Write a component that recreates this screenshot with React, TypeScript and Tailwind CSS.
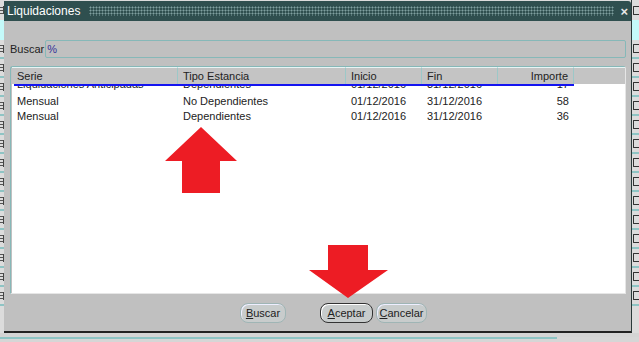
import React from 'react';

const COLS = [
  { key: 'serie', label: 'Serie', w: 'w-[166px]', align: 'text-left' },
  { key: 'tipo', label: 'Tipo Estancia', w: 'w-[168px]', align: 'text-left' },
  { key: 'inicio', label: 'Inicio', w: 'w-[76px]', align: 'text-left' },
  { key: 'fin', label: 'Fin', w: 'w-[76px]', align: 'text-left' },
  { key: 'importe', label: 'Importe', w: 'w-[76px]', align: 'text-right' },
];

const ROWS = [
  { serie: 'Liquidaciones Anticipadas', tipo: 'Dependientes', inicio: '01/12/2016', fin: '31/12/2016', importe: '17' },
  { serie: 'Mensual', tipo: 'No Dependientes', inicio: '01/12/2016', fin: '31/12/2016', importe: '58' },
  { serie: 'Mensual', tipo: 'Dependientes', inicio: '01/12/2016', fin: '31/12/2016', importe: '36' },
];

// bits of the form behind the dialog: only slivers of its fields show
function Sliver({ side }: { side: 'left' | 'right' }) {
  if (side === 'left') {
    return (
      <div className="flex items-center h-[8px]">
        <div className="w-[3px] h-[7px] border-y border-[#555] flex items-center">
          <div className="w-full h-[1px] bg-[#555]" />
        </div>
        <div className="w-[1px] h-[8px] bg-[#444]" />
      </div>
    );
  }
  return <div className="ml-[1px] w-[6px] h-[9px] border border-r-0 border-[#333] rounded-l-[1px]" />;
}

function SideStrip({ side }: { side: 'left' | 'right' }) {
  const cells = Array.from({ length: 14 });
  return (
    <div className={side === 'left' ? 'w-[4px] flex flex-col bg-[#dcdcdc]' : 'w-[7px] flex flex-col bg-[#dcdcdc]'}>
      <div className="h-[20px] shrink-0 flex items-center">
        <Sliver side={side} />
      </div>
      <div className="h-[20px] shrink-0 bg-[#c4fafa]" />
      {cells.map((_, i) => (
        <div key={i} className="h-[19px] shrink-0 flex items-center border-b-2 border-[#8ec4c4]">
          <Sliver side={side} />
        </div>
      ))}
    </div>
  );
}

function Btn({ label, focused, w }: { label: string; focused?: boolean; w: string }) {
  return (
    <button
      className={
        'h-[20px] ' + w + ' rounded-[8px] bg-[#c8cccc] text-[11px] text-[#222] flex items-center justify-center ' +
        (focused ? 'border-[1.5px] border-[#333] shadow-[inset_1px_1px_0_#fff]' : 'border border-[#9fb5b5] shadow-[inset_1px_1px_0_#eef]')
      }
    >
      <span className="underline underline-offset-1">{label[0]}</span>
      {label.slice(1)}
    </button>
  );
}

function Row({ r }: { r: (typeof ROWS)[number] }) {
  return (
    <div className="flex h-[15px] shrink-0 items-center text-[11px] text-[#222]">
      {COLS.map((c) => (
        <div key={c.key} className={c.w + ' ' + c.align + ' px-[5px] whitespace-nowrap overflow-hidden'}>
          {(r as Record<string, string>)[c.key]}
        </div>
      ))}
    </div>
  );
}

function UpArrow() {
  return (
    <svg className="absolute left-[165px] top-[127px]" width="73" height="67" viewBox="0 0 73 67">
      <path d="M36 0 L72 34 L55 34 L55 66 L17 66 L17 34 L0 34 Z" fill="#ed1c24" />
    </svg>
  );
}

function DownArrow() {
  return (
    <svg className="absolute left-[309px] top-[245px]" width="80" height="54" viewBox="0 0 80 54">
      <path d="M19 0 L59 0 L59 25 L79 25 L39 53 L0 25 L19 25 Z" fill="#ed1c24" />
    </svg>
  );
}

export default function App() {
  return (
    <div className="relative w-[639px] h-[342px] overflow-hidden bg-[#d6d6d6] font-['Liberation_Sans',Arial,sans-serif]">
      <div className="flex h-[333px]">
        <SideStrip side="left" />

        {/* dialog */}
        <div className="w-[629px] flex flex-col border-r border-[#2a3a3a] border-b-2 border-b-[#222] pt-[1px] bg-[#dcdcdc]">
          <div className="h-[20px] flex items-center bg-[#2f4f4f] rounded-tr-[3px] pl-[3px] pr-[3px]">
            <span className="text-[12px] text-white leading-none">Liquidaciones</span>
            <div className="flex-1 ml-[9px] mr-[6px] h-[10px] bg-[radial-gradient(circle,#80a0a0_0.9px,transparent_1.1px)] bg-[length:3px_3px]" />
            <span className="text-[13px] text-[#e8e8e8] leading-none font-bold">×</span>
          </div>

          <div className="flex-1 flex flex-col bg-[#c0c0c0]">
            {/* search */}
            <div className="flex items-center h-[18px] mt-[19px] pl-[6px] pr-[5px] gap-[1px]">
              <span className="text-[11px] text-[#222] whitespace-nowrap">Buscar</span>
              <div className="flex-1 h-[18px] border border-[#86b8b8] rounded-[2px] bg-[#c0c0c0] flex items-center pl-[1px]">
                <span className="text-[11px] text-[#333399]">%</span>
              </div>
            </div>

            {/* table */}
            <div className="mt-[8px] ml-[6px] mr-[5px] h-[228px] flex flex-col border-t border-l border-[#86b8b8] border-r border-r-[#e6e6e6] border-b border-b-[#e6e6e6] rounded-t-[3px] pl-[1px]">
              <div className="flex h-[17px] shrink-0 bg-[#c4c4c4]">
                {COLS.map((c) => (
                  <div
                    key={c.key}
                    className={c.w + ' px-[5px] text-[11px] text-[#222] border-r border-[#9cc8c8] border-t border-t-[#e8f4f4] flex items-center ' + (c.align === 'text-right' ? 'justify-end' : '')}
                  >
                    {c.label}
                  </div>
                ))}
                <div className="flex-1 border-t border-[#e8f4f4]" />
              </div>
              <div className="flex-1 bg-white flex flex-col overflow-hidden">
                <div className="h-[2px] w-[560px] ml-[2px] shrink-0 bg-[#1414f0]" />
                {/* first row is scrolled up under the header */}
                <div className="h-[8px] shrink-0 overflow-hidden">
                  <div className="mt-[-9px]">
                    <Row r={ROWS[0]} />
                  </div>
                </div>
                <Row r={ROWS[1]} />
                <Row r={ROWS[2]} />
              </div>
            </div>

            {/* buttons */}
            <div className="flex items-center pt-[9px] pl-[236px]">
              <Btn label="Buscar" w="w-[46px]" />
              <div className="ml-[34px]">
                <Btn label="Aceptar" focused w="w-[53px]" />
              </div>
              <div className="ml-[3px]">
                <Btn label="Cancelar" w="w-[51px]" />
              </div>
            </div>
          </div>
        </div>

        <SideStrip side="right" />
      </div>

      {/* under the dialog */}
      <div className="h-[9px] flex flex-col">
        <div className="h-[4px] bg-[#d4d4d4]" />
        <div className="h-[2px] w-[557px] bg-[#8ec4c4]" />
      </div>

      <UpArrow />
      <DownArrow />
    </div>
  );
}
